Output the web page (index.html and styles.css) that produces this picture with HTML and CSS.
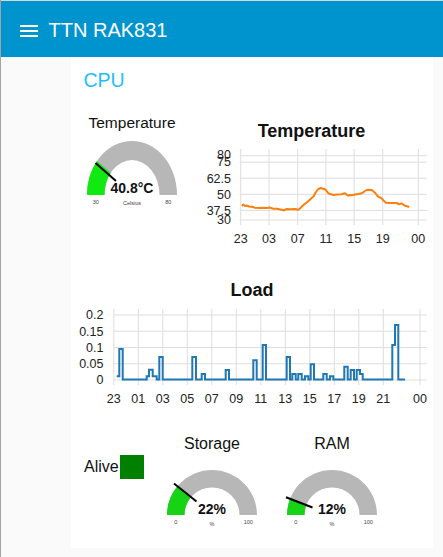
FILE: index.html
```html
<!DOCTYPE html>
<html>
<head>
<meta charset="utf-8">
<link rel="stylesheet" href="styles.css">
</head>
<body>
<header class="toolbar">
  <svg class="menu" width="18" height="12" viewBox="0 0 18 12"><rect x="0" y="0" width="18" height="2" fill="#fff"/><rect x="0" y="5" width="18" height="2" fill="#fff"/><rect x="0" y="10" width="18" height="2" fill="#fff"/></svg>
  <span class="app-title">TTN RAK831</span>
</header>
<main class="content">
  <section class="card">
    <h2 class="group-title">CPU</h2>
    <div class="row row-top">
      <div class="widget gauge-temp">
        <div class="w-title">Temperature</div>
        <svg class="gauge" width="122" height="78" viewBox="71 132 122 78">
          <path class="g-bg" d="M87 195 A45 54 0 0 1 177 195 L159.5 195 A27.5 35 0 0 0 104.5 195 Z"/>
          <path class="g-lvl bright" d="M87 195 A45 54 0 0 1 96.98 161.09 L110.6 173.02 A27.5 35 0 0 0 104.5 195 Z"/>
          <line class="needle" x1="95.5" y1="163" x2="116" y2="181"/>
          <text class="g-val" x="132" y="192.5">40.8°C</text>
          <text class="g-lab" x="95.75" y="203.5">30</text>
          <text class="g-lab" x="132" y="205">Celsius</text>
          <text class="g-lab" x="168.25" y="203.5">80</text>
        </svg>
      </div>
      <div class="widget chart-temp">
        <div class="chart-title">Temperature</div>
        <svg class="chart" width="240" height="107" viewBox="193 141 240 107">
          <g class="grid">
            <line x1="239.5" x2="427" y1="155.7" y2="155.7"/>
            <line x1="239.5" x2="427" y1="162.1" y2="162.1"/>
            <line x1="239.5" x2="427" y1="178.2" y2="178.2"/>
            <line x1="239.5" x2="427" y1="194.3" y2="194.3"/>
            <line x1="239.5" x2="427" y1="210.4" y2="210.4"/>
            <line x1="239.5" x2="427" y1="220" y2="220"/>
            <line x1="240.7" x2="240.7" y1="149" y2="225"/>
            <line x1="269" x2="269" y1="149" y2="225"/>
            <line x1="297.7" x2="297.7" y1="149" y2="225"/>
            <line x1="325.9" x2="325.9" y1="149" y2="225"/>
            <line x1="354.2" x2="354.2" y1="149" y2="225"/>
            <line x1="382.7" x2="382.7" y1="149" y2="225"/>
            <line x1="418.3" x2="418.3" y1="149" y2="225"/>
          </g>
          <g class="ylab">
            <text x="231" y="158.5">80</text>
            <text x="231" y="166.4">75</text>
            <text x="231" y="182.5">62.5</text>
            <text x="231" y="198.6">50</text>
            <text x="231" y="214.7">37.5</text>
            <text x="231" y="224.3">30</text>
          </g>
          <g class="xlab">
            <text x="240.7" y="243.3">23</text>
            <text x="269" y="243.3">03</text>
            <text x="297.7" y="243.3">07</text>
            <text x="325.9" y="243.3">11</text>
            <text x="354.2" y="243.3">15</text>
            <text x="382.7" y="243.3">19</text>
            <text x="418.3" y="243.3">00</text>
          </g>
          <path class="line-temp" d="M242,206 L243.3,204.5 L245,206 L246.7,205.5 L249,206.5 L252,206.8 L255,207.7 L259,208 L262,207.8 L266.7,208 L270,207.6 L273.3,208.7 L277,208.8 L281.7,209.7 L284,210.3 L286.7,209 L290,209.2 L295,209 L298.3,209.7 L300,208.5 L301.7,206.7 L304,204.5 L306.7,202.5 L309,200.5 L311.7,198 L313.5,196.5 L315,193.3 L316.7,191 L318.3,189 L320.7,188 L323,188.8 L325,189.3 L326.7,191 L328.3,193.3 L331,194.2 L333.3,195 L337,194.5 L341.7,194.3 L343,193.8 L345,193.3 L346.7,194.8 L348.3,195.7 L350,195 L351.7,195.2 L355,194.5 L358.3,194 L361,193.6 L363.3,192.3 L365,191 L366.7,190 L369,189.8 L371.7,190 L373.5,191.5 L375,192.7 L376.7,195 L378.3,196.7 L380,197.5 L381.7,198.3 L383.5,200.5 L386,202.7 L390,203 L394,202.9 L396.7,203 L399.3,204.3 L401.7,203.3 L403.5,204.8 L405,205.7 L407,206.3 L409.3,207"/>
        </svg>
      </div>
    </div>
    <div class="row row-load">
      <div class="chart-title center">Load</div>
      <svg class="chart" width="362" height="110" viewBox="71 300 362 110">
        <g class="grid">
          <line x1="113.8" x2="427" y1="315" y2="315"/>
          <line x1="113.8" x2="427" y1="331.25" y2="331.25"/>
          <line x1="113.8" x2="427" y1="347.5" y2="347.5"/>
          <line x1="113.8" x2="427" y1="363.75" y2="363.75"/>
          <line x1="113.8" x2="427" y1="380" y2="380"/>
          <line x1="113.8" x2="113.8" y1="309" y2="385"/>
          <line x1="138.3" x2="138.3" y1="309" y2="385"/>
          <line x1="162.8" x2="162.8" y1="309" y2="385"/>
          <line x1="187.3" x2="187.3" y1="309" y2="385"/>
          <line x1="211.8" x2="211.8" y1="309" y2="385"/>
          <line x1="236.3" x2="236.3" y1="309" y2="385"/>
          <line x1="260.8" x2="260.8" y1="309" y2="385"/>
          <line x1="285.3" x2="285.3" y1="309" y2="385"/>
          <line x1="309.8" x2="309.8" y1="309" y2="385"/>
          <line x1="334.3" x2="334.3" y1="309" y2="385"/>
          <line x1="358.8" x2="358.8" y1="309" y2="385"/>
          <line x1="383.3" x2="383.3" y1="309" y2="385"/>
          <line x1="420" x2="420" y1="309" y2="385"/>
        </g>
        <g class="ylab">
          <text x="103.5" y="319.3">0.2</text>
          <text x="103.5" y="335.6">0.15</text>
          <text x="103.5" y="351.8">0.1</text>
          <text x="103.5" y="368">0.05</text>
          <text x="103.5" y="384.3">0</text>
        </g>
        <g class="xlab">
          <text x="113.8" y="403.3">23</text>
          <text x="138.3" y="403.3">01</text>
          <text x="162.8" y="403.3">03</text>
          <text x="187.3" y="403.3">05</text>
          <text x="211.8" y="403.3">07</text>
          <text x="236.3" y="403.3">09</text>
          <text x="260.8" y="403.3">11</text>
          <text x="285.3" y="403.3">13</text>
          <text x="309.8" y="403.3">15</text>
          <text x="334.3" y="403.3">17</text>
          <text x="358.8" y="403.3">19</text>
          <text x="383.3" y="403.3">21</text>
          <text x="420" y="403.3">00</text>
        </g>
        <path class="line-load" d="M116.7,376.3 H119.3 V349 H122.7 V379.5 H146.7 V376.3 H149 V369.7 H152.7 V376.3 H156.7 V379.5 H159.3 V357 H162.7 V379.5 H192.3 V357 H196 V379.5 H201.7 V374 H205 V379.5 H225.7 V370 H229 V379.5 H253.3 V360.3 H256.7 V379.5 H262.7 V345 H266 V379.5 H286.7 V357 H290 V379.5 H292.3 V374 H295.7 V379.5 H298.3 V374 H301.7 V379.5 H305 V376.3 H308.3 V379.5 H310.7 V364.3 H314 V379.5 H323.3 V374 H326.7 V379.5 H330 V376.3 H333.3 V379.5 H344.3 V366.7 H347.7 V379.5 H350.7 V370 H354 V379.5 H356.7 V370 H360 V374 H362.7 V379.5 H392.3 V345 H395 V325 H398.3 V379.5 H405"/>
      </svg>
    </div>
    <div class="row row-bottom">
      <div class="widget alive">
        <span class="alive-label">Alive</span>
        <span class="led"></span>
      </div>
      <div class="widget gauge-small">
        <div class="w-title small">Storage</div>
        <svg class="gauge" width="120" height="77" viewBox="152 453 120 77">
          <path class="g-bg" d="M167 515 A45 45 0 0 1 257 515 L239.5 515 A27.5 27.5 0 0 0 184.5 515 Z"/>
          <path class="g-lvl" d="M167 515 A45 45 0 0 1 177.33 486.32 L190.81 497.47 A27.5 27.5 0 0 0 184.5 515 Z"/>
          <line class="needle" x1="174" y1="483.5" x2="196.5" y2="501.5"/>
          <text class="g-val" x="212" y="514.3">22%</text>
          <text class="g-lab" x="175.75" y="523.5">0</text>
          <text class="g-lab" x="212" y="525.5">%</text>
          <text class="g-lab" x="248.25" y="523.5">100</text>
        </svg>
      </div>
      <div class="widget gauge-small">
        <div class="w-title small">RAM</div>
        <svg class="gauge" width="120" height="77" viewBox="272 453 120 77">
          <path class="g-bg" d="M287 515 A45 45 0 0 1 377 515 L359.5 515 A27.5 27.5 0 0 0 304.5 515 Z"/>
          <path class="g-lvl" d="M287 515 A45 45 0 0 1 290.16 498.44 L306.43 504.88 A27.5 27.5 0 0 0 304.5 515 Z"/>
          <line class="needle" x1="286" y1="497.3" x2="312.5" y2="507.5"/>
          <text class="g-val" x="332" y="514.3">12%</text>
          <text class="g-lab" x="295.75" y="523.5">0</text>
          <text class="g-lab" x="332" y="525.5">%</text>
          <text class="g-lab" x="368.25" y="523.5">100</text>
        </svg>
      </div>
    </div>
  </section>
</main>
</body>
</html>
```
FILE: styles.css
```css
html, body {
  margin: 0;
  padding: 0;
}

body {
  width: 443px;
  height: 557px;
  box-sizing: border-box;
  border-left: 1px solid #a3a3a3;
  background: #fafafa;
  font-family: "Liberation Sans", Arial, sans-serif;
  color: #111;
  overflow: hidden;
}

.toolbar {
  height: 57px;
  box-sizing: border-box;
  border-top: 1px solid #d6d6d6;
  background: #0094ce;
  display: flex;
  align-items: center;
  padding: 2px 0 0 19px;
}

.menu {
  display: block;
  margin-top: 2px;
}

.app-title {
  margin-left: 10.5px;
  font-size: 20px;
  line-height: 20px;
  color: #fff;
}

.content {
  padding-left: 70px;
}

.card {
  width: 362px;
  height: 491px;
  box-sizing: border-box;
  background: #fff;
  padding-top: 13px;
}

.group-title {
  margin: 0 0 0 12.5px;
  font-size: 19.5px;
  line-height: 20px;
  font-weight: normal;
  color: #1bbfff;
}

.row-top {
  display: flex;
  align-items: flex-start;
  margin-top: 24px;
}

.widget svg,
.row svg {
  display: block;
}

.gauge-temp {
  width: 122px;
  display: flex;
  flex-direction: column;
  align-items: center;
}

.w-title {
  font-size: 15.5px;
  line-height: 18px;
  text-align: center;
}

.w-title.small {
  font-size: 16px;
}

.chart-temp {
  width: 240px;
  box-sizing: border-box;
  padding-top: 7px;
}

.chart-title {
  font-size: 18px;
  line-height: 20px;
  font-weight: bold;
  text-align: center;
  padding-right: 3px;
}

.chart-title.center {
  padding-right: 0;
}

.row-load {
  margin-top: 32px;
}

.row-bottom {
  display: flex;
  margin-top: 25px;
}

.alive {
  width: 81px;
  box-sizing: border-box;
  padding: 20px 0 0 13px;
  display: flex;
  align-items: flex-start;
}

.alive-label {
  font-size: 16px;
  line-height: 24px;
}

.led {
  width: 24px;
  height: 24px;
  margin-left: 1px;
  background: #008000;
}

.gauge-small {
  width: 120px;
}

.g-bg {
  fill: #b7b7b7;
}

.g-lvl {
  fill: #16d316;
}

.g-lvl.bright {
  fill: #10ea10;
}

.needle {
  stroke: #000;
  stroke-width: 2;
}

.g-val {
  font-size: 14px;
  font-weight: bold;
  text-anchor: middle;
  fill: #111;
}

.g-lab {
  font-size: 5.5px;
  text-anchor: middle;
  fill: #444;
}

.grid line {
  stroke: #dedede;
  stroke-width: 1;
}

.ylab text {
  font-size: 12.5px;
  text-anchor: end;
  fill: #222;
}

.xlab text {
  font-size: 12.5px;
  text-anchor: middle;
  fill: #222;
}

.line-temp {
  fill: none;
  stroke: #ff7f0e;
  stroke-width: 2;
  stroke-linejoin: round;
}

.line-load {
  fill: none;
  stroke: #1f77b4;
  stroke-width: 2;
}
```
